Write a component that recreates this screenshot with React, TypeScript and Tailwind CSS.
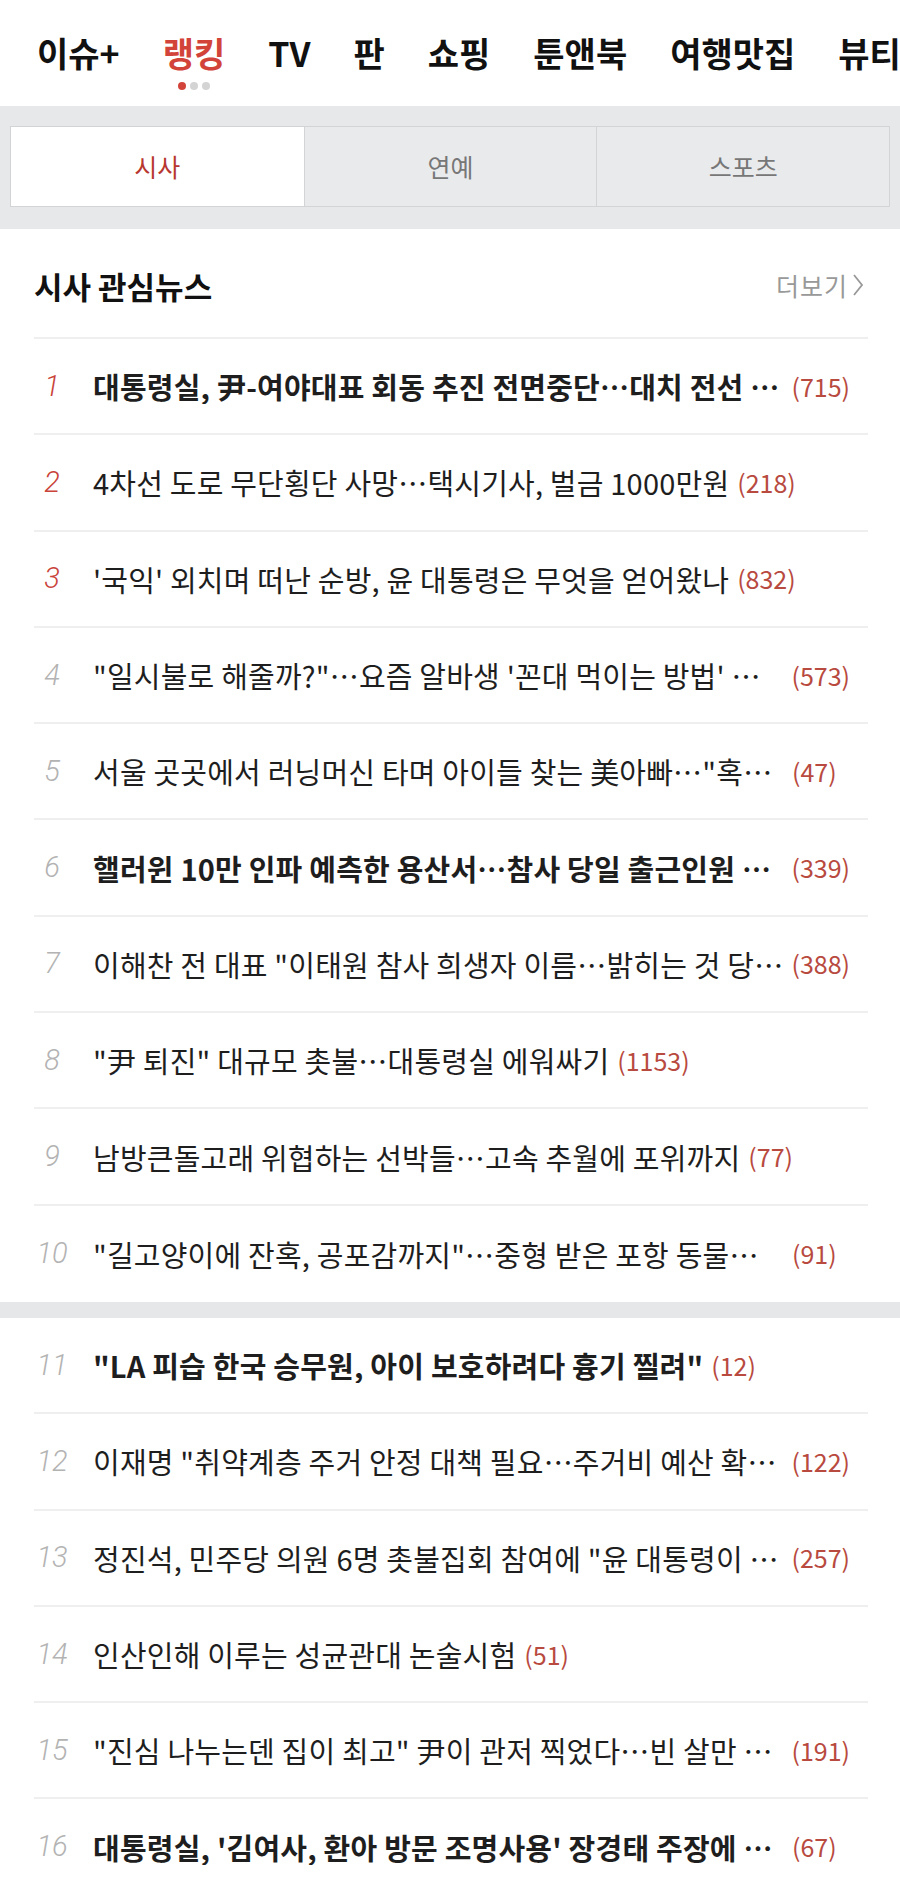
import React from "react";

const navItems = ["이슈+", "랭킹", "TV", "판", "쇼핑", "툰앤북", "여행맛집", "뷰티"];

type Row = { rank: number; title: string; count: number; bold?: boolean };

const rowsA: Row[] = [
  { rank: 1, title: "대통령실, 尹-여야대표 회동 추진 전면중단…대치 전선 격화", count: 715, bold: true },
  { rank: 2, title: "4차선 도로 무단횡단 사망…택시기사, 벌금 1000만원", count: 218 },
  { rank: 3, title: "'국익' 외치며 떠난 순방, 윤 대통령은 무엇을 얻어왔나", count: 832 },
  { rank: 4, title: "\"일시불로 해줄까?\"…요즘 알바생 '꼰대 먹이는 방법' 논란", count: 573 },
  { rank: 5, title: "서울 곳곳에서 러닝머신 타며 아이들 찾는 美아빠…\"혹시 우리 아이", count: 47 },
  { rank: 6, title: "핼러윈 10만 인파 예측한 용산서…참사 당일 출근인원 고작", count: 339, bold: true },
  { rank: 7, title: "이해찬 전 대표 \"이태원 참사 희생자 이름…밝히는 것 당연\"", count: 388 },
  { rank: 8, title: "\"尹 퇴진\" 대규모 촛불…대통령실 에워싸기", count: 1153 },
  { rank: 9, title: "남방큰돌고래 위협하는 선박들…고속 추월에 포위까지", count: 77 },
  { rank: 10, title: "\"길고양이에 잔혹, 공포감까지\"…중형 받은 포항 동물학대범", count: 91 },
];

const rowsB: Row[] = [
  { rank: 11, title: "\"LA 피습 한국 승무원, 아이 보호하려다 흉기 찔려\"", count: 12, bold: true },
  { rank: 12, title: "이재명 \"취약계층 주거 안정 대책 필요…주거비 예산 확대해야\"", count: 122 },
  { rank: 13, title: "정진석, 민주당 의원 6명 촛불집회 참여에 \"윤 대통령이 무슨", count: 257 },
  { rank: 14, title: "인산인해 이루는 성균관대 논술시험", count: 51 },
  { rank: 15, title: "\"진심 나누는덴 집이 최고\" 尹이 관저 찍었다…빈 살만 회담", count: 191 },
  { rank: 16, title: "대통령실, '김여사, 환아 방문 조명사용' 장경태 주장에 \"법적 대응\"", count: 67, bold: true },
];

function NewsRow({ r, last }: { r: Row; last?: boolean }) {
  const top = r.rank <= 3;
  return (
    <div
      className={
        "h-[96.3px] flex items-center pr-[18px] " + (last ? "" : "border-b-2 border-[#efefef]")
      }
    >
      <div
        className={
          "w-[36px] shrink-0 text-center italic font-light text-[29px] leading-none font-['Roboto',sans-serif] " +
          (top ? "text-[#c9433a]" : "text-[#b3b3b3]")
        }
      >
        {r.rank}
      </div>
      <div
        className={
          "ml-[23px] min-w-0 max-w-[691px] truncate text-[29px] leading-[36px] text-[#1e1e1e] tracking-[0.2px] " +
          (r.bold ? "font-bold" : "font-normal")
        }
      >
        {r.title}
      </div>
      <div className="ml-[8px] shrink-0 text-[25px] leading-none text-[#b84a40]">({r.count})</div>
    </div>
  );
}

export default function App() {
  return (
    <div className="w-[900px] min-h-[1888px] bg-white overflow-hidden font-['Noto_Sans_CJK_KR','Noto_Sans',sans-serif]">
      {/* top nav */}
      <nav className="h-[106px] flex items-start gap-[43px] pl-[37px] pt-[34px] whitespace-nowrap overflow-hidden">
        {navItems.map((n) => (
          <div key={n} className="flex flex-col items-center shrink-0">
            <span
              className={
                "text-[34px] leading-[38px] font-bold " +
                (n === "랭킹" ? "text-[#d2443a]" : "text-[#111]")
              }
            >
              {n}
            </span>
            {n === "랭킹" && (
              <div className="flex gap-[4px] mt-[10px]">
                <span className="w-[8px] h-[8px] rounded-full bg-[#d2443a]" />
                <span className="w-[8px] h-[8px] rounded-full bg-[#d4d4d4]" />
                <span className="w-[8px] h-[8px] rounded-full bg-[#d4d4d4]" />
              </div>
            )}
          </div>
        ))}
      </nav>

      {/* tabs band */}
      <div className="bg-[#e7e8ea] px-[10px] pt-[20px] pb-[22px]">
        <div className="grid grid-cols-3 h-[81px] border border-[#d3d4d6] bg-[#e9eaec]">
          <div className="flex items-center justify-center bg-white text-[25px] text-[#b8372f]">시사</div>
          <div className="flex items-center justify-center border-l border-[#d3d4d6] text-[25px] text-[#777]">연예</div>
          <div className="flex items-center justify-center border-l border-[#d3d4d6] text-[25px] text-[#777]">스포츠</div>
        </div>
      </div>

      {/* section */}
      <section className="pl-[34px] pr-[32px]">
        <div className="h-[110px] flex items-center justify-between border-b-2 border-[#efefef] pt-[4px]">
          <h2 className="text-[31px] font-bold text-[#111] leading-none">시사 관심뉴스</h2>
          <div className="flex items-center text-[25px] text-[#999] leading-none tracking-[1px] mr-[4px]">
            더보기
            <svg width="12" height="24" viewBox="0 0 12 24" className="ml-[4px]">
              <path d="M2 2 L10 12 L2 22" fill="none" stroke="#999" strokeWidth="1.8" />
            </svg>
          </div>
        </div>
        {rowsA.map((r, i) => (
          <NewsRow key={r.rank} r={r} last={i === rowsA.length - 1} />
        ))}
      </section>

      <div className="h-[16px] bg-[#e6e7e9]" />

      <section className="pl-[34px] pr-[32px]">
        {rowsB.map((r) => (
          <NewsRow key={r.rank} r={r} />
        ))}
      </section>
    </div>
  );
}
